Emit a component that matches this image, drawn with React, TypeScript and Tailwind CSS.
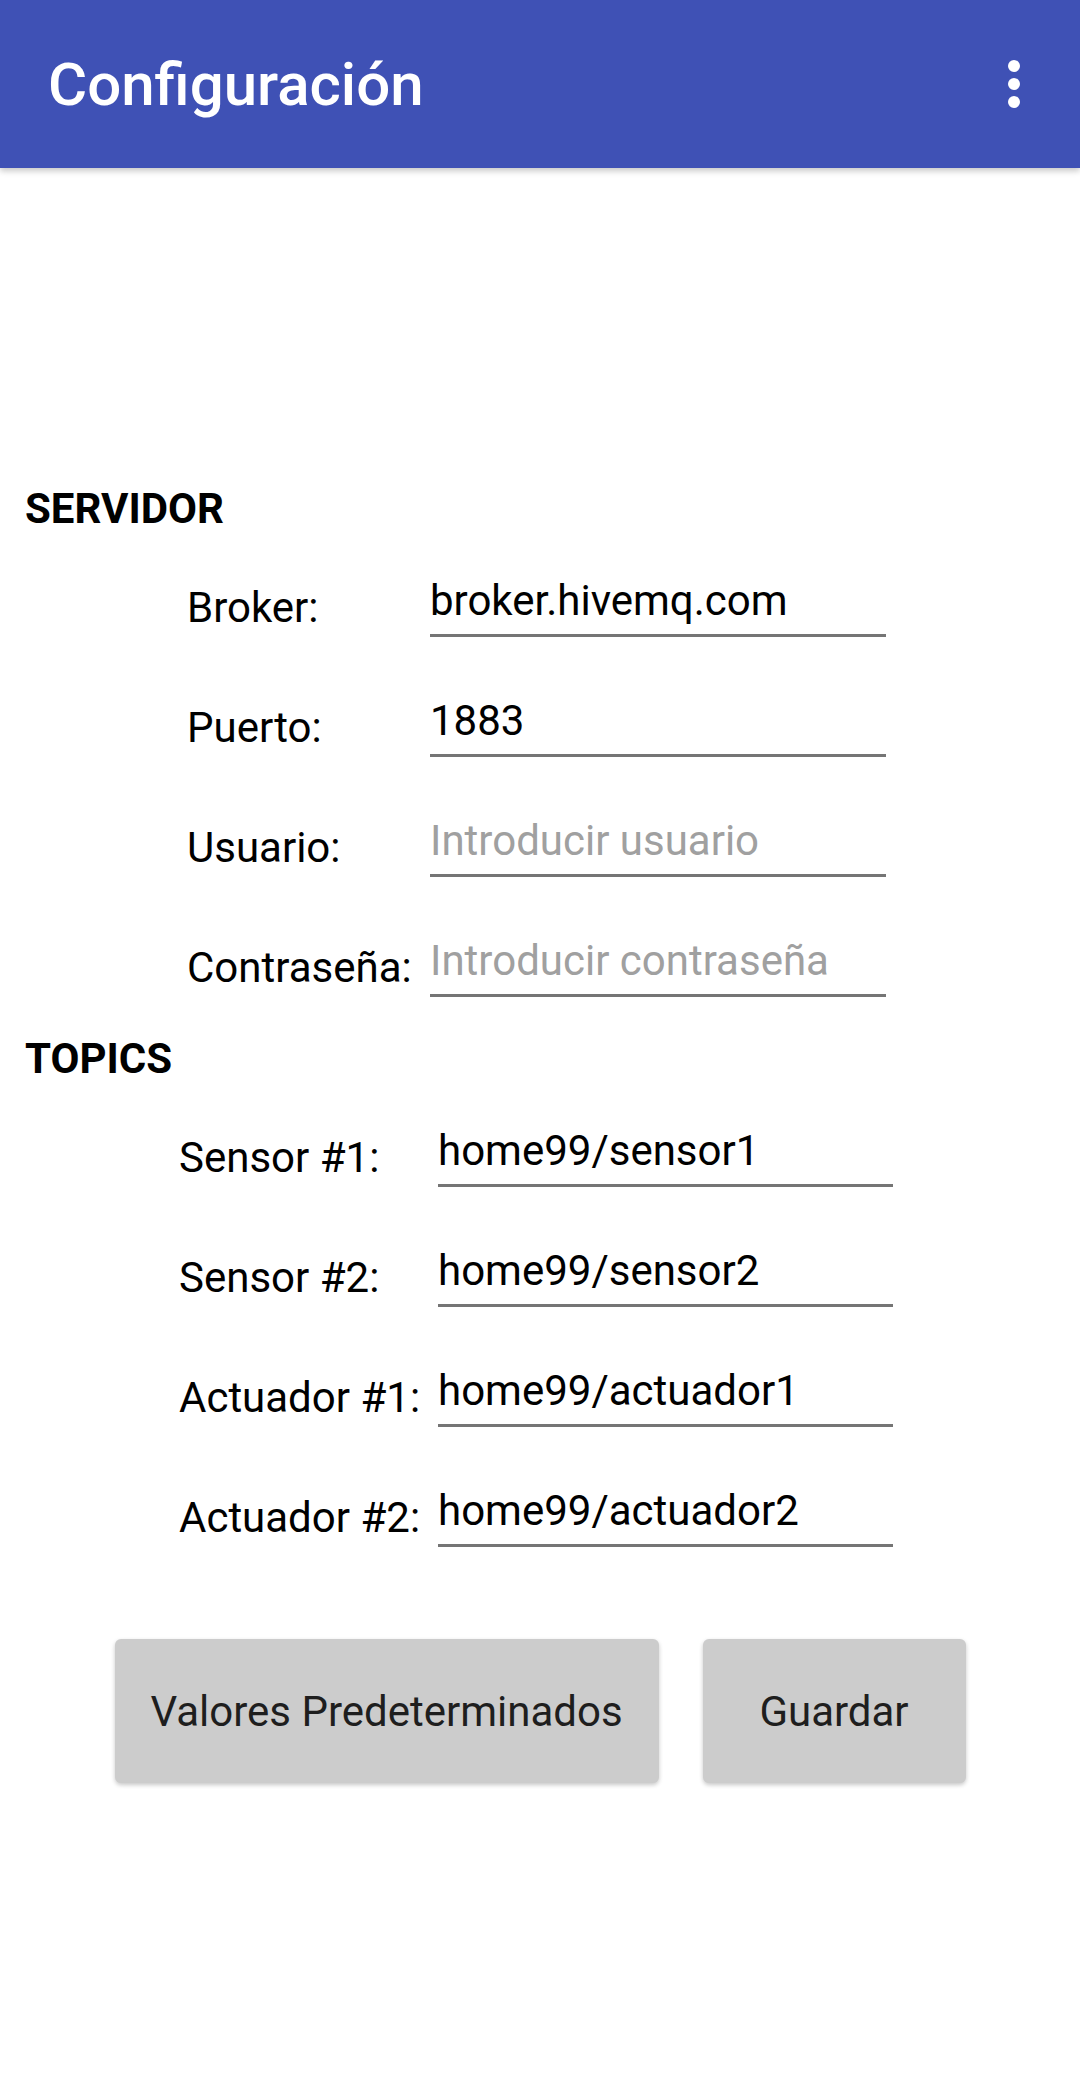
const SERVIDOR = [
  { label: 'Broker:', value: 'broker.hivemq.com', hint: '' },
  { label: 'Puerto:', value: '1883', hint: '' },
  { label: 'Usuario:', value: '', hint: 'Introducir usuario' },
  { label: 'Contraseña:', value: '', hint: 'Introducir contraseña' },
]

const TOPICS = [
  { label: 'Sensor #1:', value: 'home99/sensor1' },
  { label: 'Sensor #2:', value: 'home99/sensor2' },
  { label: 'Actuador #1:', value: 'home99/actuador1' },
  { label: 'Actuador #2:', value: 'home99/actuador2' },
]

function Field({ value, hint, width }: { value: string; hint?: string; width: string }) {
  return (
    <input
      readOnly
      value={value}
      placeholder={hint}
      className={[
        'mt-[43px] h-[61px] border-b-[3px] border-[#757575] bg-transparent p-0 pb-[10px] text-[42px] leading-[48px] text-black outline-none placeholder:text-[#a0a0a0]',
        width,
      ].join(' ')}
    />
  )
}

export default function App() {
  return (
    <div className="min-h-screen bg-white font-['Roboto',sans-serif] text-black">
      {/* toolbar */}
      <div className="relative z-10 flex h-[168px] items-center justify-between bg-[#3f51b5] pl-[48px] pr-[60px] shadow-[0_3px_6px_rgba(0,0,0,0.22)]">
        <h1 className="pt-[2px] text-[60px] font-medium leading-[72px] text-white">Configuración</h1>
        <div className="flex flex-col gap-[6px]">
          <span className="block h-[12px] w-[12px] rounded-full bg-white" />
          <span className="block h-[12px] w-[12px] rounded-full bg-white" />
          <span className="block h-[12px] w-[12px] rounded-full bg-white" />
        </div>
      </div>

      <div className="mt-[317px] pl-[25px] text-[42px] font-bold leading-[48px]">SERVIDOR</div>
      {SERVIDOR.map((r) => (
        <div key={r.label} className="flex h-[120px] items-start pl-[187px]">
          <span className="mt-[51px] w-[243px] shrink-0 text-[42px] leading-[48px]">{r.label}</span>
          <Field value={r.value} hint={r.hint} width="w-[456px]" />
        </div>
      ))}

      <div className="mt-[22px] pl-[25px] text-[42px] font-bold leading-[48px]">TOPICS</div>
      {TOPICS.map((r) => (
        <div key={r.label} className="flex h-[120px] items-start pl-[179px]">
          <span className="mt-[51px] w-[259px] shrink-0 text-[42px] leading-[48px]">{r.label}</span>
          <Field value={r.value} width="w-[455px]" />
        </div>
      ))}

      <div className="mt-[76px] flex justify-center gap-[44px]">
        <button className="h-[144px] w-[544px] rounded-[6px] bg-[#cccccc] text-[42px] text-[#1e1e1e] shadow-[0_2px_4px_rgba(0,0,0,0.22)]">
          Valores Predeterminados
        </button>
        <button className="h-[144px] w-[263px] rounded-[6px] bg-[#cccccc] text-[42px] text-[#1e1e1e] shadow-[0_2px_4px_rgba(0,0,0,0.22)]">
          Guardar
        </button>
      </div>
    </div>
  )
}
